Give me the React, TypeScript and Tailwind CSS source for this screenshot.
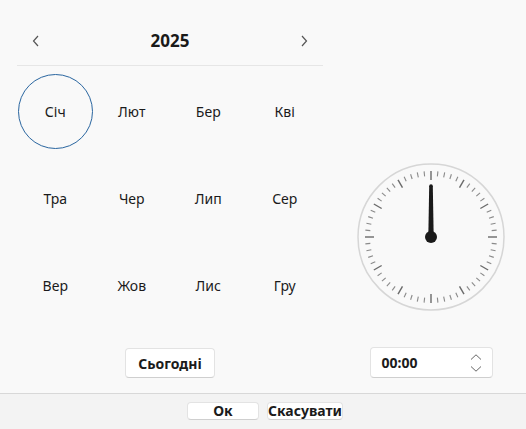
import React from 'react';

const months = ['Січ', 'Лют', 'Бер', 'Кві', 'Тра', 'Чер', 'Лип', 'Сер', 'Вер', 'Жов', 'Лис', 'Гру'];

const Clock: React.FC = () => {
  const ticks = Array.from({ length: 60 }, (_, i) => {
    const a = (i * 6 * Math.PI) / 180;
    const major = i % 5 === 0;
    const r1 = 66;
    const r2 = major ? 57 : 61;
    return (
      <line
        key={i}
        x1={74 + r1 * Math.sin(a)}
        y1={74 - r1 * Math.cos(a)}
        x2={74 + r2 * Math.sin(a)}
        y2={74 - r2 * Math.cos(a)}
        stroke={major ? '#6a6a6a' : '#8a8a8a'}
        strokeWidth={major ? 1.4 : 1.1}
      />
    );
  });
  return (
    <svg width="148" height="148" viewBox="0 0 148 148">
      <circle cx="74" cy="74" r="73" fill="none" stroke="#d6d6d6" strokeWidth="1.5" />
      {ticks}
      <polygon points="72.2,23 75.8,23 76.7,74 71.3,74" fill="#1a1a1a" />
      <circle cx="74" cy="23" r="1.8" fill="#1a1a1a" />
      <circle cx="74" cy="74" r="6" fill="#1a1a1a" />
    </svg>
  );
};

const App: React.FC = () => {
  return (
    <div
      className="w-[526px] h-[429px] flex flex-col bg-[#f9f9f9] text-[#1b1b1b]"
      style={{ fontFamily: '"Noto Sans", "Open Sans", sans-serif' }}
    >
      {/* Main */}
      <div className="h-[394px] flex border-b border-[#d8d8d8]">
        {/* Month calendar */}
        <div className="w-[306px] ml-[17px] pt-[18px] flex flex-col">
          <div className="h-[48px] flex items-center justify-between border-b border-[#e6e6e6] px-[15px] pb-[2px]">
            <svg width="8" height="12" viewBox="0 0 8 12">
              <polyline points="6,1 1.5,6 6,11" fill="none" stroke="#555" strokeWidth="1.2" />
            </svg>
            <span className="text-[17px] font-bold text-[#1a1a1a]">2025</span>
            <svg width="8" height="12" viewBox="0 0 8 12">
              <polyline points="2,1 6.5,6 2,11" fill="none" stroke="#555" strokeWidth="1.2" />
            </svg>
          </div>
          <div className="mt-[2px] grid grid-cols-4 grid-rows-[87px_87px_87px]">
            {months.map((m, i) => (
              <div key={m} className="flex items-center justify-center">
                <div
                  className={`w-[75px] h-[75px] rounded-full flex items-center justify-center text-[14px] ${
                    i === 0 ? 'border-[1.5px] border-[#2a66a0]' : ''
                  }`}
                >
                  {m}
                </div>
              </div>
            ))}
          </div>
          <div className="flex justify-center mt-[19px]">
            <button className="h-[30px] w-[90px] bg-white rounded-[4px] border border-[#e3e3e3] border-b-[#cfcfcf] text-[14px] font-bold">
              Сьогодні
            </button>
          </div>
        </div>

        {/* Time */}
        <div className="w-[182px] ml-[17px] pt-[163px] flex flex-col items-center">
          <Clock />
          <div className="mt-[36px] h-[31px] w-[123px] bg-white rounded-[4px] border border-[#e3e3e3] border-b-[#cfcfcf] flex items-center justify-between pl-[11px] pr-[10px]">
            <span className="text-[14px] font-bold">00:00</span>
            <div className="flex flex-col gap-[6px]">
              <svg width="12" height="6" viewBox="0 0 12 6">
                <polyline points="1,5.5 6,0.8 11,5.5" fill="none" stroke="#666" strokeWidth="1" />
              </svg>
              <svg width="12" height="6" viewBox="0 0 12 6">
                <polyline points="1,0.5 6,5.2 11,0.5" fill="none" stroke="#666" strokeWidth="1" />
              </svg>
            </div>
          </div>
        </div>
      </div>

      {/* Footer */}
      <div className="flex-1 bg-[#f3f3f3] flex justify-center items-start pt-[8px] gap-[8px] pl-[4px]">
        <button className="h-[18px] w-[72px] bg-white rounded-[4px] border border-[#e3e3e3] border-b-[#cfcfcf] text-[14px] font-bold leading-none">
          Ок
        </button>
        <button className="h-[18px] bg-white rounded-[4px] border border-[#e3e3e3] border-b-[#cfcfcf] text-[14px] font-bold leading-none px-0">
          Скасувати
        </button>
      </div>
    </div>
  );
};

export default App;
